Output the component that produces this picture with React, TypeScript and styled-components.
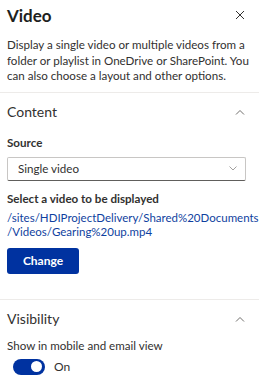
import * as React from 'react';
import styled, { createGlobalStyle } from 'styled-components';

const GlobalStyle = createGlobalStyle`
  html, body {
    margin: 0;
    padding: 0;
    background: #ffffff;
  }
  body {
    font-family: Lato, 'Liberation Sans', sans-serif;
    color: #323130;
  }
`;

const Panel = styled.div`
  width: 259px;
  height: 388px;
  overflow: hidden;
  background: #ffffff;
`;

const Header = styled.div`
  padding: 5px 7px 0 7px;
`;

const TitleRow = styled.div`
  display: flex;
  align-items: center;
  justify-content: space-between;
  height: 20px;
`;

const Title = styled.h1`
  margin: 0;
  font-size: 17px;
  font-weight: 700;
  color: #201f1e;
`;

const IconButton = styled.button`
  border: 0;
  background: none;
  padding: 0;
  width: 20px;
  height: 20px;
  display: flex;
  align-items: center;
  justify-content: center;
  margin-right: 2px;
  color: #323130;
`;

const Description = styled.p`
  margin: 12px 0 0 0;
  font-size: 11.6px;
  line-height: 15.5px;
  color: #323130;
`;

const Divider = styled.div<{ top: number }>`
  height: 1px;
  background: #edebe9;
  margin-top: ${(p) => p.top}px;
`;

const Section = styled.section`
  padding: 0 7px;
`;

const SectionHeader = styled.div`
  display: flex;
  align-items: center;
  justify-content: space-between;
  height: 38px;
`;

const SectionTitle = styled.h2`
  margin: 0;
  font-size: 14px;
  font-weight: 400;
  color: #323130;
`;

const Label = styled.div<{ light?: boolean; gap?: number }>`
  font-size: 11.6px;
  font-weight: ${(p) => (p.light ? 400 : 700)};
  color: #323130;
  line-height: 16px;
  margin-top: ${(p) => p.gap ?? 0}px;
`;

const Select = styled.div`
  margin-top: 6px;
  height: 24px;
  box-sizing: border-box;
  border: 1px solid #c8c6c4;
  border-bottom-color: #605e5c;
  border-radius: 2px;
  display: flex;
  align-items: center;
  justify-content: space-between;
  padding: 0 8px 0 10px;
  margin-right: 6px;
  font-size: 11.6px;
  color: #323130;
`;

const Link = styled.div`
  margin-top: 4px;
  font-size: 11.5px;
  line-height: 14.5px;
  color: #0f3fa0;
  white-space: nowrap;
`;

const PrimaryButton = styled.button`
  margin-top: 8px;
  width: 72px;
  height: 26px;
  border: 0;
  border-radius: 3px;
  background: #0032a0;
  color: #ffffff;
  font-family: inherit;
  font-size: 12px;
  font-weight: 700;
`;

const ToggleRow = styled.div`
  display: flex;
  align-items: center;
  gap: 9px;
  margin-top: 5px;
  padding-left: 6px;
`;

const Track = styled.div`
  width: 32px;
  height: 16px;
  border-radius: 8px;
  background: #0032a0;
  display: flex;
  align-items: center;
  justify-content: flex-end;
  padding: 0 3px;
  box-sizing: border-box;
`;

const Thumb = styled.div`
  width: 11px;
  height: 11px;
  border-radius: 50%;
  background: #ffffff;
`;

const ToggleText = styled.span`
  font-size: 12px;
  color: #323130;
`;

const Close = () => (
  <svg width="10" height="10" viewBox="0 0 10 10">
    <path d="M1 1 L9 9 M9 1 L1 9" stroke="#323130" strokeWidth="1" fill="none" />
  </svg>
);

const ChevronUp = () => (
  <svg width="10" height="6" viewBox="0 0 10 6">
    <path d="M1 5.5 L5 1.5 L9 5.5" stroke="#605e5c" strokeWidth="0.9" fill="none" />
  </svg>
);

const ChevronDown = () => (
  <svg width="8" height="5" viewBox="0 0 8 5">
    <path d="M0.5 0.5 L4 4 L7.5 0.5" stroke="#8a8886" strokeWidth="0.8" fill="none" />
  </svg>
);

export default function App() {
  return (
    <Panel>
      <GlobalStyle />
      <Header>
        <TitleRow>
          <Title>Video</Title>
          <IconButton aria-label="Close">
            <Close />
          </IconButton>
        </TitleRow>
        <Description>
          Display a single video or multiple videos from a folder or playlist in
          OneDrive or SharePoint. You can also choose a layout and other options.
        </Description>
      </Header>
      <Divider top={8} />
      <Section>
        <SectionHeader>
          <SectionTitle>Content</SectionTitle>
          <IconButton aria-label="Collapse">
            <ChevronUp />
          </IconButton>
        </SectionHeader>
        <Label gap={4}>Source</Label>
        <Select>
          <span>Single video</span>
          <ChevronDown />
        </Select>
        <Label gap={10}>Select a video to be displayed</Label>
        <Link>
          /sites/HDIProjectDelivery/Shared%20Documents
          <br />
          /Videos/Gearing%20up.mp4
        </Link>
        <PrimaryButton>Change</PrimaryButton>
      </Section>
      <Divider top={25} />
      <Section>
        <SectionHeader>
          <SectionTitle>Visibility</SectionTitle>
          <IconButton aria-label="Collapse">
            <ChevronUp />
          </IconButton>
        </SectionHeader>
        <Label light>Show in mobile and email view</Label>
        <ToggleRow>
          <Track>
            <Thumb />
          </Track>
          <ToggleText>On</ToggleText>
        </ToggleRow>
      </Section>
    </Panel>
  );
}
